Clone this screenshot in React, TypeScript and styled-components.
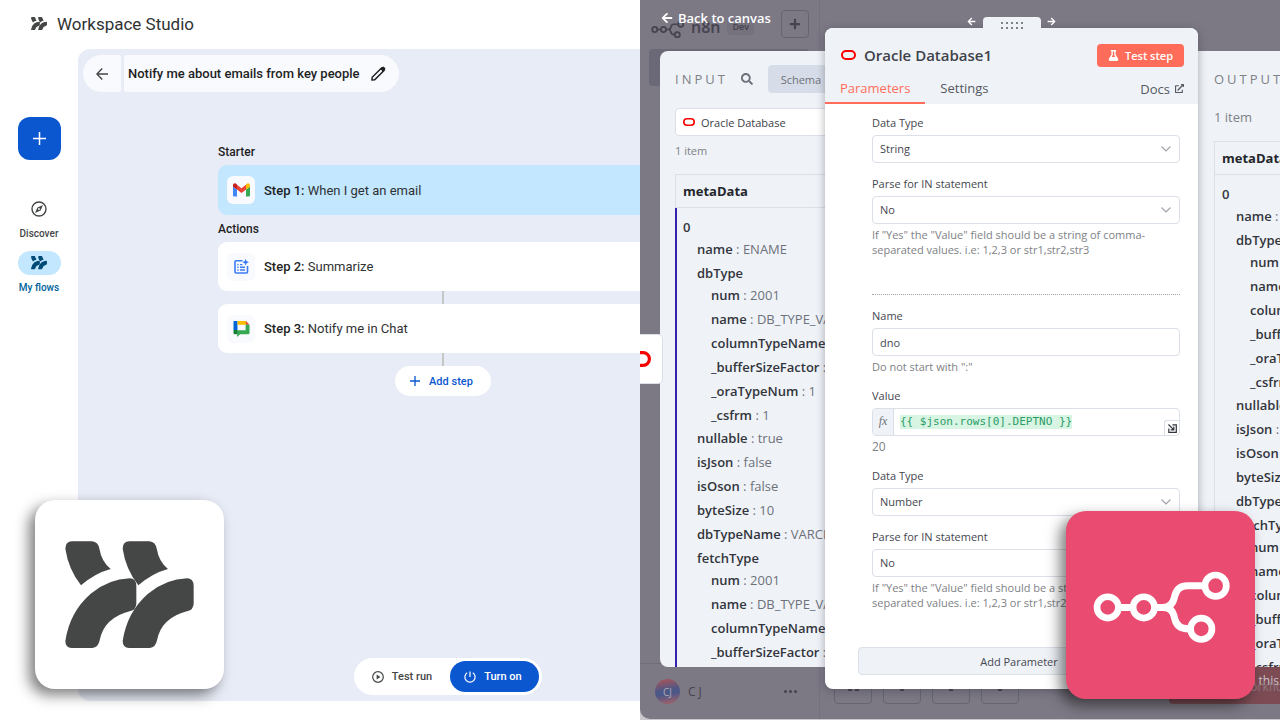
import React from 'react';
import styled, { createGlobalStyle, css } from 'styled-components';
import { FaSearch, FaFlask, FaArrowLeft, FaArrowRight, FaExternalLinkAlt, FaPlus } from 'react-icons/fa';

const GlobalStyle = createGlobalStyle`
  *, *::before, *::after { box-sizing: border-box; }
  body { margin: 0; background: #fff; }
  ul, h1, h2, p { margin: 0; padding: 0; list-style: none; font-size: inherit; font-weight: inherit; }
  button, input, select { font: inherit; color: inherit; margin: 0; border: 0; padding: 0; background: none; }
  button, a { cursor: pointer; }
  a { color: inherit; text-decoration: none; }
  svg { display: block; flex: none; }
`;

const Page = styled.main`
  display: grid;
  grid-template-columns: minmax(0, 1fr) minmax(0, 1fr);
  height: 100vh;
  overflow: hidden;
`;

/* ---------- Workspace Studio ---------- */

const Studio = styled.section`
  position: relative;
  display: flex;
  flex-direction: column;
  padding-bottom: 19px;
  overflow: hidden;
  font-family: Roboto, 'Open Sans', sans-serif;
  color: #1f1f1f;
`;

const StudioHeader = styled.header`
  display: flex;
  align-items: center;
  gap: 10px;
  height: 49px;
  padding: 0 0 2px 31px;
  color: #444746;
`;

const StudioName = styled.h1`
  font-size: 17px;
  line-height: 24px;
  color: #303233;
`;

const StudioBody = styled.div`
  flex: 1;
  display: grid;
  grid-template-columns: 78px minmax(0, 1fr);
`;

const Rail = styled.nav`
  display: flex;
  flex-direction: column;
  align-items: center;
  padding-top: 68px;
`;

const NewButton = styled.button`
  display: grid;
  place-items: center;
  width: 43px;
  height: 43px;
  margin-bottom: 37px;
  border-radius: 12px;
  background: #0b57d0;
  color: #fff;
`;

const RailLink = styled.a<{ $active?: boolean }>`
  display: flex;
  flex-direction: column;
  align-items: center;
  gap: 6px;
  margin-bottom: 10px;
  font-size: 10px;
  font-weight: 500;
  line-height: 14px;
  color: ${p => (p.$active ? '#00639b' : '#444746')};
`;

const RailPill = styled.span<{ $active?: boolean }>`
  display: grid;
  place-items: center;
  width: 43px;
  height: 24px;
  border-radius: 12px;
  background: ${p => (p.$active ? '#c2e7ff' : 'transparent')};
  color: ${p => (p.$active ? '#004a77' : '#444746')};
`;

const Canvas = styled.div`
  display: flex;
  flex-direction: column;
  padding: 6px 0 6px 5px;
  border-radius: 12px 0 0 12px;
  background: #e8ecf6;
  overflow: hidden;
`;

const TitleBar = styled.div`
  display: flex;
  gap: 3px;
  height: 37px;
`;

const BackButton = styled.button`
  display: grid;
  place-items: center;
  width: 38px;
  border-radius: 19px 2px 2px 19px;
  background: #f8fafd;
  color: #444746;
`;

const FlowTitle = styled.div`
  display: flex;
  align-items: center;
  gap: 11px;
  padding: 0 13px 0 4px;
  border-radius: 2px 19px 19px 2px;
  background: #f8fafd;
`;

const FlowName = styled.h2`
  font-size: 13px;
  font-weight: 500;
  line-height: 20px;
`;

const IconButton = styled.button`
  display: grid;
  place-items: center;
`;

const Flow = styled.div`
  display: flex;
  flex-direction: column;
  flex: 1;
  width: 450px;
  margin: 51px 0 0 135px;
`;

const GroupLabel = styled.p`
  padding: 1px 0 5px;
  font-size: 12px;
  font-weight: 500;
  line-height: 16px;
`;

const StepCard = styled.button<{ $selected?: boolean }>`
  display: flex;
  align-items: center;
  gap: 9px;
  height: ${p => (p.$selected ? 50 : 49)}px;
  margin-bottom: ${p => (p.$selected ? 5 : 0)}px;
  padding-left: 9px;
  border-radius: 9px;
  background: ${p => (p.$selected ? '#c2e7ff' : '#fff')};
  font-size: 13px;
  text-align: left;
  color: #303233;
  b { font-weight: 500; color: #1f1f1f; }
`;

const StepIcon = styled.span`
  display: grid;
  place-items: center;
  width: 28px;
  height: 28px;
  border-radius: 6px;
  background: #f8fafd;
`;

const Connector = styled.div`
  width: 2px;
  height: 13px;
  align-self: center;
  background: #c4c7c5;
`;

const AddStep = styled.button`
  display: flex;
  align-items: center;
  align-self: center;
  gap: 9px;
  height: 30px;
  padding: 0 18px 0 15px;
  border-radius: 15px;
  background: #fff;
  font-size: 11px;
  font-weight: 500;
  color: #0b57d0;
`;

const RunDock = styled.div`
  display: flex;
  align-self: flex-start;
  margin-left: 271px;
  padding: 3px;
  border-radius: 19px;
  background: #fff;
`;

const DockButton = styled.button<{ $primary?: boolean }>`
  display: flex;
  align-items: center;
  justify-content: center;
  gap: 8px;
  width: ${p => (p.$primary ? 89 : 93)}px;
  height: 31px;
  padding-right: 3px;
  border-radius: 16px;
  font-size: 11px;
  font-weight: 500;
  background: ${p => (p.$primary ? '#0b57d0' : 'transparent')};
  color: ${p => (p.$primary ? '#fff' : '#444746')};
`;

const logoCard = css`
  position: absolute;
  display: grid;
  place-items: center;
  width: 189px;
  border-radius: 20px;
  box-shadow: -6px 6px 14px rgba(0, 0, 0, 0.5);
`;

const StudioBadge = styled.div`
  ${logoCard}
  left: 35px;
  bottom: 31px;
  height: 189px;
  background: #fff;
  color: #444746;
`;

const N8nBadge = styled.div`
  ${logoCard}
  right: 25px;
  bottom: 21px;
  height: 188px;
  background: #ea4b71;
  color: #fff;
  z-index: 3;
`;

/* ---------- n8n editor behind the dialog ---------- */

const Editor = styled.section`
  position: relative;
  padding-bottom: 1px;
  overflow: hidden;
  background: #c9c8cc;
  font-family: 'Open Sans', 'Noto Sans', sans-serif;
  color: #40424a;
`;

const Shell = styled.div`
  display: grid;
  grid-template-columns: 180px minmax(0, 1fr);
  height: 100%;
  border-bottom-left-radius: 10px;
  background: #7c7884;
  color: #45434e;
`;

const SideMenu = styled.aside`
  display: flex;
  flex-direction: column;
  border-right: 1px solid #737080;
`;

const Brand = styled.div`
  display: flex;
  align-items: flex-end;
  gap: 7px;
  padding: 10px 10px 0 11px;
  font-size: 16px;
  font-weight: 600;
  line-height: 22px;
`;

const DevTag = styled.span`
  margin-bottom: 3px;
  padding: 0 4px;
  border: 1px solid #747080;
  border-radius: 3px;
  background: #75717d;
  font-size: 9px;
  line-height: 14px;
`;

const SquareButton = styled.button`
  display: grid;
  place-items: center;
  width: 28px;
  height: 28px;
  margin-left: auto;
  border: 1px solid #676472;
  border-radius: 4px;
`;

const MenuEntry = styled.div`
  height: 37px;
  margin: 11px 10px 0 9px;
  border-radius: 4px;
  background: #6b6877;
`;

const UserRow = styled.div`
  display: flex;
  align-items: center;
  gap: 8px;
  height: 56px;
  margin-top: auto;
  padding: 0 22px 0 15px;
  border-top: 1px solid #716e7b;
  font-size: 12px;
  letter-spacing: 3px;
`;

const Avatar = styled.span`
  display: grid;
  place-items: center;
  width: 25px;
  height: 25px;
  border-radius: 50%;
  background: linear-gradient(170deg, #9b5560 10%, #4d5787 45%, #4d5787 60%, #98606c 90%);
  font-size: 10px;
  letter-spacing: 0;
  color: #a9a7b3;
`;

const Dots = styled.span`
  display: flex;
  gap: 2px;
  margin-left: auto;
  i { width: 3px; height: 3px; border-radius: 50%; background: #45434e; }
`;

const CanvasTools = styled.div`
  display: flex;
  align-items: flex-end;
  gap: 11px;
  padding: 0 0 15px 14px;
`;

const ToolButton = styled.button`
  display: flex;
  justify-content: center;
  align-items: center;
  gap: 3px;
  width: 38px;
  height: 30px;
  border: 1px solid #676472;
  border-radius: 4px;
  i { width: 4px; height: 4px; background: #45434e; }
`;

const ExecuteButton = styled.button`
  display: flex;
  flex-direction: column;
  flex: 1;
  height: 37px;
  margin-left: 139px;
  padding: 6px 0 0 76px;
  border-radius: 0 0 0 4px;
  background: #7c4b54;
  font-size: 12px;
  line-height: 16px;
  text-align: left;
  white-space: nowrap;
  overflow: hidden;
  color: #cfc4ca;
  small { margin: -10px 0 0 -4px; font-size: 12px; color: #8f7680; }
`;

/* ---------- node dialog ---------- */

const Dialog = styled.div`
  position: absolute;
  inset: 0;
  display: grid;
  grid-template-columns: 165px 373px minmax(0, 1fr);
  padding-left: 20px;
`;

const BackLink = styled.a`
  position: absolute;
  left: 21px;
  top: 9px;
  display: flex;
  align-items: center;
  gap: 5px;
  font-size: 13px;
  font-weight: 600;
  line-height: 18px;
  color: #fff;
`;

const PrevNode = styled.button`
  position: absolute;
  left: 0;
  top: 334px;
  display: flex;
  align-items: center;
  justify-content: flex-end;
  width: 23px;
  height: 50px;
  padding-right: 11px;
  border: 1px solid #dbdfe7;
  border-left: 0;
  border-radius: 0 5px 5px 0;
  background: #fff;
  overflow: hidden;
`;

const DataPanel = styled.section<{ $side: 'input' | 'output' }>`
  display: flex;
  flex-direction: column;
  margin: 51px 0 53px;
  padding: 14px 0 0 ${p => (p.$side === 'input' ? 15 : 16)}px;
  border-radius: ${p => (p.$side === 'input' ? '8px 0 0 8px' : '0')};
  background: #eff3f8;
  overflow: hidden;
  white-space: nowrap;
`;

const PanelHead = styled.div`
  display: flex;
  flex: none;
  align-items: center;
  height: 28px;
  color: #6d717a;
`;

const PanelTitle = styled.h2`
  font-size: 13px;
  letter-spacing: 3px;
  color: #7e8186;
`;

const SearchButton = styled(IconButton)`
  margin: 0 15px 0 13px;
`;

const ViewTab = styled.button`
  flex: none;
  width: 66px;
  height: 28px;
  border-radius: 4px 0 0 4px;
  background: #d7dde8;
  font-size: 11px;
  font-weight: 500;
`;

const NodePicker = styled.button`
  display: flex;
  align-items: center;
  gap: 6px;
  flex: none;
  width: 170px;
  height: 28px;
  margin-top: 15px;
  padding-left: 7px;
  border: 1px solid #dbdfe7;
  border-radius: 4px;
  background: #fff;
  font-size: 11px;
`;

const ItemCount = styled.p<{ $large?: boolean }>`
  flex: none;
  margin: ${p => (p.$large ? '15px 0' : '6px 0 14px')};
  font-size: ${p => (p.$large ? 13 : 11)}px;
  line-height: 18px;
  color: #7e8186;
`;

const DataTable = styled.table`
  width: 220px;
  border-collapse: separate;
  border-spacing: 0;
  border-left: 1px solid #dbdfe7;
  text-align: left;
  font-size: 13px;
  line-height: 24px;
`;

const HeadCell = styled.th`
  height: 34px;
  padding: 0 7px;
  border-top: 1px solid #dbdfe7;
  border-bottom: 1px solid #dbdfe7;
  font-weight: 700;
  color: #25262b;
`;

const DataCell = styled.td<{ $marked?: boolean }>`
  padding: 7px;
  vertical-align: top;
  font-weight: 600;
  color: #33353c;
  ${p => p.$marked && css`box-shadow: inset 1px 0 #3322b0, -1px 0 #3322b0;`}
`;

const Branch = styled.ul`
  margin: -2px 0 -1px 14px;
`;

const Plain = styled.span`
  font-weight: 400;
  color: #6d717a;
`;

const NodePanel = styled.section`
  position: relative;
  z-index: 1;
  align-self: start;
  margin-top: 28px;
  border-radius: 8px;
  background: #fff;
  box-shadow: 0 2px 8px rgba(50, 50, 65, 0.4);
`;

const DragHandle = styled.button`
  position: absolute;
  left: 158px;
  top: -11px;
  display: grid;
  grid-template-columns: repeat(5, 2px);
  gap: 3px;
  place-content: end center;
  width: 58px;
  height: 13px;
  padding-bottom: 1px;
  border-radius: 4px 4px 0 0;
  background: #eff3f8;
  i { width: 2px; height: 2px; background: #7e8186; }
`;

const Nudge = styled.button<{ $right?: boolean }>`
  position: absolute;
  top: -11px;
  left: ${p => (p.$right ? 222 : 142)}px;
  color: #fff;
`;

const NodeHead = styled.header`
  padding: 14px 14px 0 0;
  border-radius: 8px 8px 0 0;
  background: #eff3f8;
`;

const NodeTitle = styled.div`
  display: flex;
  align-items: center;
  gap: 8px;
  padding-left: 16px;
  font-size: 15px;
  font-weight: 600;
  line-height: 26px;
  color: #40424a;
`;

const TestButton = styled.button`
  display: flex;
  align-items: center;
  gap: 6px;
  height: 23px;
  margin-left: auto;
  padding: 0 11px;
  border-radius: 4px;
  background: #ff6d5a;
  font-size: 11px;
  font-weight: 600;
  line-height: 23px;
  color: #fff;
`;

const Tabs = styled.nav`
  display: flex;
  margin-top: 5px;
  font-size: 13px;
  font-weight: 500;
  color: #555860;
`;

const Tab = styled.a<{ $active?: boolean }>`
  padding: 6px 15px 5px;
  line-height: 18px;
  border-bottom: 2px solid ${p => (p.$active ? '#ff6d5a' : 'transparent')};
  color: ${p => (p.$active ? '#ff6d5a' : 'inherit')};
`;

const DocsLink = styled.a`
  display: flex;
  align-items: center;
  gap: 5px;
  margin-left: auto;
`;

const Form = styled.form`
  padding: 10px 18px 14px 47px;
`;

const Field = styled.div`
  & + & { margin-top: 12px; }
`;

const Label = styled.label`
  display: block;
  margin-bottom: 3px;
  font-size: 11px;
  line-height: 18px;
  color: #45474f;
`;

const Control = styled.div`
  position: relative;
  display: flex;
  height: 28px;
  border: 1px solid #dbdfe7;
  border-radius: 4px;
  background: #fff;
  font-size: 11px;
  color: #45474f;
  overflow: hidden;
`;

const Select = styled.select`
  flex: 1;
  appearance: none;
  padding: 0 7px 1px;
`;

const Chevron = styled.svg`
  position: absolute;
  right: 8px;
  top: 10px;
  pointer-events: none;
`;

const TextInput = styled.input`
  flex: 1;
  min-width: 0;
  padding: 0 7px;
`;

const FxMark = styled.span`
  width: 21px;
  border-right: 1px solid #dbdfe7;
  background: #eff3f8;
  font: italic 12px/24px 'Liberation Serif', serif;
  text-align: center;
  color: #6d717a;
`;

const Expression = styled.input`
  width: 26ch;
  height: 14px;
  margin: 6px 0 0 6px;
  background: #d8f4e3;
  font: 11px/14px 'DejaVu Sans Mono', monospace;
  color: #2a9d68;
`;

const ExpandButton = styled.button`
  display: grid;
  place-items: center;
  align-self: flex-end;
  width: 15px;
  height: 15px;
  margin-left: auto;
  border: solid #dbdfe7;
  border-width: 1px 0 0 1px;
  border-radius: 3px 0 0 0;
  color: #33353c;
`;

const Hint = styled.p<{ $result?: boolean }>`
  margin-top: 3px;
  padding-bottom: 1px;
  font-size: ${p => (p.$result ? 12 : 11)}px;
  line-height: 15px;
  color: #7e8186;
`;

const Divider = styled.hr`
  height: 1px;
  margin: 36px 0 12px;
  border: 0;
  border-top: 1px dotted #a5a7ad;
`;

const AddParameter = styled.button`
  display: block;
  width: calc(100% + 14px);
  height: 28px;
  margin: 36px 0 0 -14px;
  border: 1px solid #dbdfe7;
  border-radius: 4px;
  background: #eff3f8;
  font-size: 11px;
  color: #45474f;
`;

/* ---------- drawings ---------- */

const StudioMark = ({ width }: { width: number }) => (
  <svg width={width} viewBox="136 152 387 322" fill="currentColor" aria-hidden>
    {[0, 172].map(x => (
      <g key={x} transform={`translate(${x} 0)`}>
        <path d="M157 153H217Q236 154 240 178Q245 212 273 236Q225 249 184 285Q146 236 137 175Q137 154 157 153Z" />
        <path d="M330 264Q350 265 350 287V340Q349 358 332 362Q253 382 240 450Q236 472 218 473H156Q137 472 137 452Q150 365 213 310Q267 266 330 264Z" />
      </g>
    ))}
  </svg>
);

const N8nMark = ({ width, light }: { width: number; light?: boolean }) => (
  <svg width={width} viewBox="426 355 410 223" fill="none" stroke="currentColor" strokeWidth={light ? 22 : 20} overflow="visible" aria-hidden>
    <circle cx="473" cy="473" r="32" />
    <circle cx="581" cy="473" r="32" />
    <circle cx="796" cy="408" r="32" />
    <circle cx="753" cy="537" r="32" />
    <path strokeWidth="21" d="M512 473H542M618 473H638Q665 473 672 445L674 438Q681 408 712 408H757M638 473Q665 473 671 497L674 508Q681 537 714 537" />
  </svg>
);

const OracleMark = ({ width }: { width: number }) => (
  <svg width={width} viewBox="0 0 30 20" fill="none" stroke="#f80000" strokeWidth="4" aria-hidden>
    <rect x="2" y="2" width="26" height="16" rx="8" />
  </svg>
);

const Plus = ({ size, weight = 1 }: { size: number; weight?: number }) => (
  <svg width={size} height={size} viewBox="0 0 12 12" stroke="currentColor" strokeWidth={weight} aria-hidden>
    <path d="M6 0V12M0 6H12" />
  </svg>
);

const Compass = () => (
  <svg width="16" height="16" viewBox="0 0 16 16" fill="none" stroke="currentColor" strokeWidth="1.4" aria-hidden>
    <circle cx="8" cy="8" r="7" />
    <path fill="currentColor" fillRule="evenodd" stroke="none" d="M12 4L9.6 9.6L4 12L6.4 6.4ZM8 7.1A.9.9 0 1 0 8 8.9A.9.9 0 0 0 8 7.1Z" />
  </svg>
);

const BackArrow = () => (
  <svg width="12" height="12" viewBox="0 0 12 12" fill="none" stroke="currentColor" strokeWidth="1.4" aria-hidden>
    <path d="M6.2 .6L.9 6L6.2 11.4M1 6H12" />
  </svg>
);

const Pencil = () => (
  <svg width="15" height="15" viewBox="0 0 15 15" fill="none" stroke="#1f1f1f" strokeWidth="1.5" aria-hidden>
    <path d="M1 14L1.2 11.3L10.5 2L13 4.5L3.7 13.8Z" />
    <path fill="#1f1f1f" stroke="none" d="M9.3 3L11.4 .9Q12.2 .2 13 1L14.1 2.1Q14.8 2.9 14 3.7L12 5.7Z" />
  </svg>
);

const GmailMark = () => (
  <svg width="17" height="14" viewBox="0 0 17 14" aria-hidden>
    <path fill="#4285f4" d="M0 3.5L4 6.5V13.5H1.2Q0 13.5 0 12.4Z" />
    <path fill="#34a853" d="M13 6.5L17 3.5V12.4Q17 13.5 15.8 13.5H13Z" />
    <path fill="#ea4335" d="M4 1.8L8.5 5.2L13 1.8V6.5L8.5 10L4 6.5Z" />
    <path fill="#c5221f" d="M0 2Q.1 .1 2 .2Q2.6 .2 4 1.6V6.5L0 3.7Z" />
    <path fill="#fbbc04" d="M17 2Q16.9 .1 15 .2Q14.4 .2 13 1.6V6.5L17 3.7Z" />
  </svg>
);

const SummaryMark = () => (
  <svg width="15" height="15" viewBox="0 0 15 15" fill="none" stroke="#3b7cf5" strokeWidth="1.6" aria-hidden>
    <path d="M8.6 1.8H2Q1 1.8 1 2.8V13Q1 14 2 14H12.5Q13.5 14 13.5 13V7" />
    <path strokeWidth="1.4" d="M3.3 5.6H4.6M3.3 8.3H4.6M3.3 11H4.6M6 5.6H8.4M6 8.3H11M6 11H11" />
    <path fill="#3b7cf5" stroke="none" d="M11.6 0Q12 2.8 14.9 3.3Q12 3.7 11.6 6.4Q11.2 3.7 8.4 3.3Q11.2 2.8 11.6 0Z" />
  </svg>
);

const ChatMark = () => (
  <svg width="17" height="17" viewBox="0 0 17 17" aria-hidden>
    <path fill="#0066da" d="M1.2 1H4.5V10H.5V1.8Q.5 1 1.2 1Z" />
    <path fill="#fbbc04" d="M4.5 1H13V4.8H4.5Z" />
    <path fill="#ea4335" d="M13 1L16.5 4.8H13Z" />
    <path fill="#34a853" d="M12.6 4.8H16.5V13Q16.5 14.2 15.3 14.2H7L4.8 16.6Q4.2 17 4.2 16.2V10.3H12.6Z" />
    <path fill="#188038" d="M.5 10H4.5V14.2H1.8Q.5 14.2 .5 13Z" />
  </svg>
);

const PlayCircle = () => (
  <svg width="12" height="12" viewBox="0 0 12 12" fill="none" stroke="currentColor" strokeWidth="1.2" aria-hidden>
    <circle cx="6" cy="6" r="5.3" />
    <path fill="currentColor" stroke="none" d="M4.6 3.5L8.5 6L4.6 8.5Z" />
  </svg>
);

const Power = () => (
  <svg width="12" height="12" viewBox="0 0 12 12" fill="none" stroke="currentColor" strokeWidth="1.2" aria-hidden>
    <path d="M6 .5V6M3.2 1.8A5.1 5.1 0 1 0 8.8 1.8" />
  </svg>
);

const Expand = () => (
  <svg width="9" height="9" viewBox="0 0 9 9" fill="none" stroke="currentColor" strokeWidth="1.2" aria-hidden>
    <path d="M.5 .5L5.8 5.8M5.8 2.6V5.8H2.6M4.4 .8H8.3V8.3H.8V4.4" />
  </svg>
);

/* ---------- data ---------- */

type Entry = { key: string; value?: string; children?: Entry[] };

const typeInfo: Entry[] = [
  { key: 'num', value: '2001' },
  { key: 'name', value: 'DB_TYPE_VARCHAR' },
  { key: 'columnTypeName', value: 'VARCHAR2' },
  { key: '_bufferSizeFactor', value: '4' },
  { key: '_oraTypeNum', value: '1' },
  { key: '_csfrm', value: '1' },
];

const metaData: Entry[] = [
  { key: 'name', value: 'ENAME' },
  { key: 'dbType', children: typeInfo },
  { key: 'nullable', value: 'true' },
  { key: 'isJson', value: 'false' },
  { key: 'isOson', value: 'false' },
  { key: 'byteSize', value: '10' },
  { key: 'dbTypeName', value: 'VARCHAR2' },
  { key: 'fetchType', children: typeInfo },
];

const Entries = ({ items }: { items: Entry[] }) => (
  <Branch>
    {items.map(e => (
      <li key={e.key}>
        {e.key}
        {e.value && <Plain> : {e.value}</Plain>}
        {e.children && <Entries items={e.children} />}
      </li>
    ))}
  </Branch>
);

const MetaTable = ({ marked }: { marked?: boolean }) => (
  <DataTable>
    <thead>
      <tr><HeadCell scope="col">metaData</HeadCell></tr>
    </thead>
    <tbody>
      <tr>
        <DataCell $marked={marked}>
          0
          <Entries items={metaData} />
        </DataCell>
      </tr>
    </tbody>
  </DataTable>
);

const SelectField = ({ id, label, options, hint }: { id: string; label: string; options: string[]; hint?: string }) => (
  <Field>
    <Label htmlFor={id}>{label}</Label>
    <Control>
      <Select id={id}>
        {options.map(o => <option key={o}>{o}</option>)}
      </Select>
      <Chevron width="10" height="6" viewBox="0 0 10 6" fill="none" stroke="#a0a3aa" strokeWidth="1.2">
        <path d="M.5 .5L5 5L9.5 .5" />
      </Chevron>
    </Control>
    {hint && <Hint>{hint}</Hint>}
  </Field>
);

const inHint = 'If "Yes" the "Value" field should be a string of comma-separated values. i.e: 1,2,3 or str1,str2,str3';

const StudioApp = () => (
  <Studio>
    <StudioHeader>
      <StudioMark width={16} />
      <StudioName>Workspace Studio</StudioName>
    </StudioHeader>
    <StudioBody>
      <Rail>
        <NewButton aria-label="New flow"><Plus size={13} weight={1.4} /></NewButton>
        <RailLink href="#discover">
          <RailPill><Compass /></RailPill>
          Discover
        </RailLink>
        <RailLink href="#flows" $active>
          <RailPill $active><StudioMark width={16} /></RailPill>
          My flows
        </RailLink>
      </Rail>
      <Canvas>
        <TitleBar>
          <BackButton aria-label="Back"><BackArrow /></BackButton>
          <FlowTitle>
            <FlowName>Notify me about emails from key people</FlowName>
            <IconButton aria-label="Rename"><Pencil /></IconButton>
          </FlowTitle>
        </TitleBar>
        <Flow>
          <GroupLabel>Starter</GroupLabel>
          <StepCard $selected>
            <StepIcon><GmailMark /></StepIcon>
            <span><b>Step 1:</b> When I get an email</span>
          </StepCard>
          <GroupLabel>Actions</GroupLabel>
          <StepCard>
            <StepIcon><SummaryMark /></StepIcon>
            <span><b>Step 2:</b> Summarize</span>
          </StepCard>
          <Connector />
          <StepCard>
            <StepIcon><ChatMark /></StepIcon>
            <span><b>Step 3:</b> Notify me in Chat</span>
          </StepCard>
          <Connector />
          <AddStep><Plus size={10} weight={1.6} />Add step</AddStep>
        </Flow>
        <RunDock>
          <DockButton><PlayCircle />Test run</DockButton>
          <DockButton $primary><Power />Turn on</DockButton>
        </RunDock>
      </Canvas>
    </StudioBody>
    <StudioBadge><StudioMark width={129} /></StudioBadge>
  </Studio>
);

const EditorShell = () => (
  <Shell>
    <SideMenu>
      <Brand>
        <N8nMark width={33} light />
        n8n
        <DevTag>Dev</DevTag>
        <SquareButton aria-label="Create"><FaPlus size={12} /></SquareButton>
      </Brand>
      <MenuEntry />
      <UserRow>
        <Avatar>CJ</Avatar>
        CJ
        <Dots><i /><i /><i /></Dots>
      </UserRow>
    </SideMenu>
    <CanvasTools>
      <ToolButton aria-label="Fit view"><i /><i /></ToolButton>
      <ToolButton aria-label="Zoom in"><i /></ToolButton>
      <ToolButton aria-label="Zoom out"><i /></ToolButton>
      <ToolButton aria-label="Tidy up"><i /></ToolButton>
      <ExecuteButton><span>in this</span><small>workflow</small></ExecuteButton>
    </CanvasTools>
  </Shell>
);

const NodeForm = () => (
  <Form>
    <SelectField id="type-1" label="Data Type" options={['String', 'Number']} />
    <SelectField id="parse-1" label="Parse for IN statement" options={['No', 'Yes']} hint={inHint} />
    <Divider />
    <Field>
      <Label htmlFor="name">Name</Label>
      <Control><TextInput id="name" defaultValue="dno" /></Control>
      <Hint>Do not start with ":"</Hint>
    </Field>
    <Field>
      <Label htmlFor="value">Value</Label>
      <Control>
        <FxMark>fx</FxMark>
        <Expression id="value" defaultValue="{{ $json.rows[0].DEPTNO }}" />
        <ExpandButton type="button" aria-label="Open editor"><Expand /></ExpandButton>
      </Control>
      <Hint $result>20</Hint>
    </Field>
    <SelectField id="type-2" label="Data Type" options={['Number', 'String']} />
    <SelectField id="parse-2" label="Parse for IN statement" options={['No', 'Yes']} hint={inHint} />
    <AddParameter type="button">Add Parameter</AddParameter>
  </Form>
);

export default function App() {
  return (
    <Page>
      <GlobalStyle />
      <StudioApp />
      <Editor>
        <EditorShell />
        <Dialog>
          <BackLink href="#canvas"><FaArrowLeft size={12} />Back to canvas</BackLink>
          <PrevNode aria-label="Previous node"><OracleMark width={24} /></PrevNode>
          <DataPanel $side="input">
            <PanelHead>
              <PanelTitle>INPUT</PanelTitle>
              <SearchButton aria-label="Search"><FaSearch size={12} /></SearchButton>
              <ViewTab>Schema</ViewTab>
            </PanelHead>
            <NodePicker><OracleMark width={12} />Oracle Database</NodePicker>
            <ItemCount>1 item</ItemCount>
            <MetaTable marked />
          </DataPanel>
          <NodePanel>
            <Nudge aria-label="Move left"><FaArrowLeft size={9} /></Nudge>
            <DragHandle aria-label="Drag panel">
              {Array.from({ length: 10 }, (_, i) => <i key={i} />)}
            </DragHandle>
            <Nudge $right aria-label="Move right"><FaArrowRight size={9} /></Nudge>
            <NodeHead>
              <NodeTitle>
                <OracleMark width={15} />
                <h2>Oracle Database1</h2>
                <TestButton><FaFlask size={11} />Test step</TestButton>
              </NodeTitle>
              <Tabs>
                <Tab href="#parameters" $active>Parameters</Tab>
                <Tab href="#settings">Settings</Tab>
                <DocsLink href="#docs">Docs<FaExternalLinkAlt size={9} /></DocsLink>
              </Tabs>
            </NodeHead>
            <NodeForm />
          </NodePanel>
          <DataPanel $side="output">
            <PanelHead><PanelTitle>OUTPUT</PanelTitle></PanelHead>
            <ItemCount $large>1 item</ItemCount>
            <MetaTable />
          </DataPanel>
        </Dialog>
        <N8nBadge><N8nMark width={137} /></N8nBadge>
      </Editor>
    </Page>
  );
}
